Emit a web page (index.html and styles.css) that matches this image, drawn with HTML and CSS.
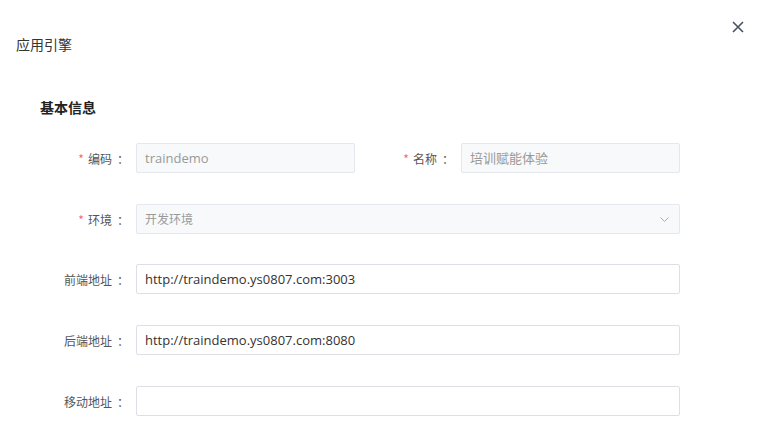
FILE: index.html
```html
<!DOCTYPE html>
<html lang="zh">
<head>
<meta charset="utf-8">
<link rel="stylesheet" href="styles.css">
</head>
<body>
<div class="dialog">
  <div class="header">
    <span class="title">应用引擎</span>
    <button class="close" aria-label="close">
      <svg width="12" height="12" viewBox="0 0 12 12"><path d="M1 1L11 11M11 1L1 11" stroke="#4a5060" stroke-width="1.6" fill="none"/></svg>
    </button>
  </div>
  <div class="section">基本信息</div>
  <div class="form">
    <div class="row">
      <div class="item half-left">
        <label class="label req">编码<span class="colon">：</span></label>
        <div class="input disabled">traindemo</div>
      </div>
      <div class="item half-right">
        <label class="label req">名称<span class="colon">：</span></label>
        <div class="input disabled">培训赋能体验</div>
      </div>
    </div>
    <div class="row">
      <div class="item full">
        <label class="label req">环境<span class="colon">：</span></label>
        <div class="input select disabled"><span class="ph">开发环境</span>
          <svg class="chev" width="9" height="5" viewBox="0 0 9 5"><path d="M0.5 0.5L4.5 4.5L8.5 0.5" stroke="#a8acb3" stroke-width="1" fill="none"/></svg>
        </div>
      </div>
    </div>
    <div class="row tight">
      <div class="item full">
        <label class="label">前端地址<span class="colon">：</span></label>
        <div class="input">http://traindemo.ys0807.com:3003</div>
      </div>
    </div>
    <div class="row">
      <div class="item full">
        <label class="label">后端地址<span class="colon">：</span></label>
        <div class="input">http://traindemo.ys0807.com:8080</div>
      </div>
    </div>
    <div class="row">
      <div class="item full">
        <label class="label">移动地址<span class="colon">：</span></label>
        <div class="input"></div>
      </div>
    </div>
  </div>
</div>
</body>
</html>
```
FILE: styles.css
```css
* { box-sizing: border-box; }
html, body { margin: 0; padding: 0; background: #fff; }
body {
  font-family: "Open Sans", "Noto Sans CJK SC", sans-serif;
  color: #333;
  width: 765px;
  height: 428px;
  overflow: hidden;
}
.dialog { padding: 0; }
.header {
  position: relative;
  height: 64px;
  padding: 34px 0 0 16px;
}
.title {
  font-family: "Noto Sans CJK SC", sans-serif;
  font-size: 14px;
  line-height: 20px;
  color: #333;
  display: block;
}
.close {
  position: absolute;
  top: 21px;
  left: 732px;
  width: 12px;
  height: 12px;
  padding: 0;
  border: 0;
  background: none;
  display: flex;
}
.section {
  font-family: "Noto Sans CJK SC", sans-serif;
  font-weight: 700;
  font-size: 14px;
  line-height: 20px;
  color: #222;
  padding: 33px 0 0 40px;
  height: 79px;
}
.form { padding-left: 40px; display: flex; flex-direction: column; gap: 31px; }
.row { display: flex; height: 30px; }
.row.tight { margin-top: -1px; }
.item { display: flex; align-items: center; }
.half-left { width: 315px; }
.half-right { width: 325px; }
.half-left .label { width: 96px; }
.half-right .label { width: 106px; }
.full { width: 640px; }
.full .label { width: 96px; }
.label {
  font-family: "Noto Sans CJK SC", sans-serif;
  font-size: 12px;
  color: #555;
  text-align: right;
  padding-right: 7px;
  flex: none;
}
.colon { padding-left: 5px; }
.label.req::before {
  content: "*";
  color: #f56c6c;
  margin-right: 4px;
}
.input {
  flex: 1;
  height: 30px;
  border: 1px solid #dcdfe6;
  border-radius: 2px;
  padding: 0 8px;
  font-size: 13px;
  line-height: 28px;
  color: #333;
  background: #fff;
  white-space: nowrap;
}
.input.disabled {
  background: #f7f9fb;
  border-color: #e4e7ed;
  color: #999;
}
.select { display: flex; align-items: center; justify-content: space-between; }
.ph { font-family: "Noto Sans CJK SC", sans-serif; font-size: 12px; color: #999; }
.chev { margin-right: 2px; }
```
